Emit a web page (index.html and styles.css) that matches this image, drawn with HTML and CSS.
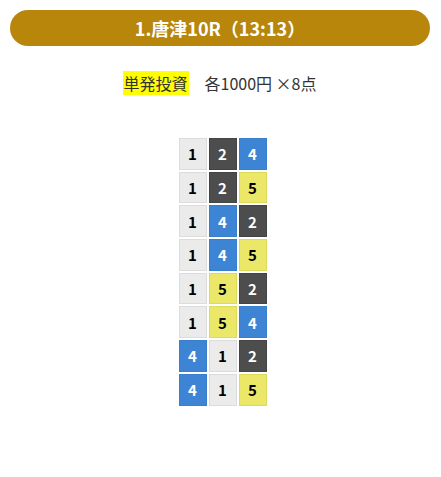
FILE: index.html
```html
<!DOCTYPE html>
<html lang="ja">
<head>
<meta charset="utf-8">
<link rel="stylesheet" href="styles.css">
</head>
<body>
<div class="page">
  <div class="race-title">1.唐津10R（13:13）</div>
  <div class="bet-line"><span class="bet-type">単発投資</span><span class="bet-detail">各1000円 ×8点</span></div>
  <div class="combos">
    <div class="row"><span class="c w">1</span><span class="c k">2</span><span class="c b">4</span></div>
    <div class="row"><span class="c w">1</span><span class="c k">2</span><span class="c y">5</span></div>
    <div class="row"><span class="c w">1</span><span class="c b">4</span><span class="c k">2</span></div>
    <div class="row"><span class="c w">1</span><span class="c b">4</span><span class="c y">5</span></div>
    <div class="row"><span class="c w">1</span><span class="c y">5</span><span class="c k">2</span></div>
    <div class="row"><span class="c w">1</span><span class="c y">5</span><span class="c b">4</span></div>
    <div class="row"><span class="c b">4</span><span class="c w">1</span><span class="c k">2</span></div>
    <div class="row"><span class="c b">4</span><span class="c w">1</span><span class="c y">5</span></div>
  </div>
</div>
</body>
</html>
```
FILE: styles.css
```css
html, body {
  margin: 0;
  padding: 0;
  background: #fff;
}
body {
  font-family: "Noto Sans CJK JP", "Noto Sans", sans-serif;
  color: #333;
}
.page {
  padding: 10px 11px 0 10px;
}
.race-title {
  height: 36px;
  line-height: 36px;
  border-radius: 18px;
  background: #b8860b;
  color: #fff;
  font-weight: bold;
  font-size: 18px;
  text-align: center;
}
.bet-line {
  margin-top: 25px;
  display: flex;
  justify-content: center;
  align-items: center;
  font-size: 16px;
  line-height: 24px;
  padding-right: 1px;
}
.bet-type {
  background: #ffff00;
  padding: 0 1px;
}
.bet-detail {
  margin-left: 16px;
}
.combos {
  margin-top: 43px;
  display: flex;
  flex-direction: column;
  align-items: center;
  gap: 2px;
  padding-left: 5px;
}
.row {
  display: flex;
  gap: 2px;
}
.c {
  box-sizing: border-box;
  width: 28px;
  height: 31.7px;
  display: flex;
  align-items: center;
  justify-content: center;
  font-weight: bold;
  font-size: 15px;
  border: 1px solid transparent;
}
.w { background: #ebebeb; border-color: #dcdcdc; color: #000; }
.k { background: #4d4d4d; border-color: #444; color: #fff; }
.b { background: #3d84d4; border-color: #3a7fcc; color: #fff; }
.y { background: #ebe869; border-color: #dedb5c; color: #000; }
```
